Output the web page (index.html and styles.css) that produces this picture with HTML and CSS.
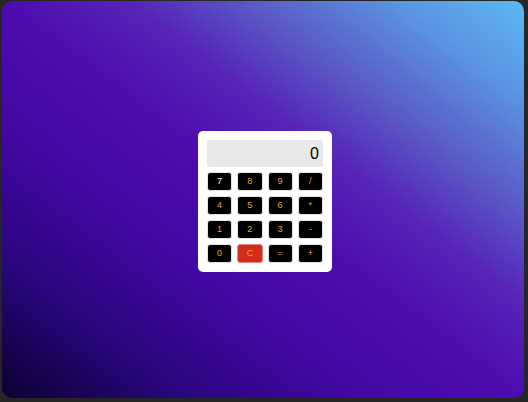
FILE: index.html
```html
<!DOCTYPE html>
<html>
<head>
<meta charset="utf-8">
<link rel="stylesheet" href="styles.css">
</head>
<body>
<div class="frame">
  <div class="panel">
    <div class="calc">
      <div class="display">0</div>
      <div class="keys">
        <button class="key key-white">7</button>
        <button class="key">8</button>
        <button class="key">9</button>
        <button class="key">/</button>
        <button class="key">4</button>
        <button class="key">5</button>
        <button class="key">6</button>
        <button class="key">*</button>
        <button class="key">1</button>
        <button class="key">2</button>
        <button class="key">3</button>
        <button class="key">-</button>
        <button class="key">0</button>
        <button class="key key-clear">C</button>
        <button class="key">=</button>
        <button class="key">+</button>
      </div>
    </div>
  </div>
</div>
</body>
</html>
```
FILE: styles.css
```css
html, body {
  margin: 0;
  padding: 0;
  width: 528px;
  height: 402px;
  background: #262626;
  overflow: hidden;
}
.frame {
  box-sizing: border-box;
  width: 528px;
  height: 402px;
  padding: 1px 4px 4px 2px;
}
.panel {
  width: 100%;
  height: 100%;
  border-radius: 10px;
  background: linear-gradient(to top right, #0c0032 0%, #2a0680 18%, #4508a6 36%, #4e0cb0 50%, #5624b8 62%, #5a5cc8 74%, #5a96e2 88%, #5bb8f4 100%);
  display: flex;
  align-items: center;
  justify-content: center;
  padding: 3px 0 0 4px;
  box-sizing: border-box;
}
.calc {
  width: 134px;
  box-sizing: border-box;
  background: #ffffff;
  border-radius: 5px;
  padding: 9px;
}
.display {
  height: 27px;
  background: #e8e8e8;
  border-radius: 3px;
  box-sizing: border-box;
  padding: 0 4px;
  text-align: right;
  line-height: 27px;
  font-family: "Liberation Sans", Arial, sans-serif;
  font-size: 16px;
  color: #000;
  margin-bottom: 5px;
}
.keys {
  display: grid;
  grid-template-columns: repeat(4, 1fr);
  column-gap: 5px;
  row-gap: 5px;
}
.key {
  height: 19px;
  margin: 0;
  padding: 0;
  background: #000;
  border: 1px solid #e4e4e4;
  border-radius: 3px;
  font-family: "Liberation Sans", Arial, sans-serif;
  font-size: 9px;
  color: #f0a22a;
}
.key-white {
  color: #f4f4f4;
}
.key-clear {
  background: #d42b1e;
  border-color: #e88a7c;
}
```
